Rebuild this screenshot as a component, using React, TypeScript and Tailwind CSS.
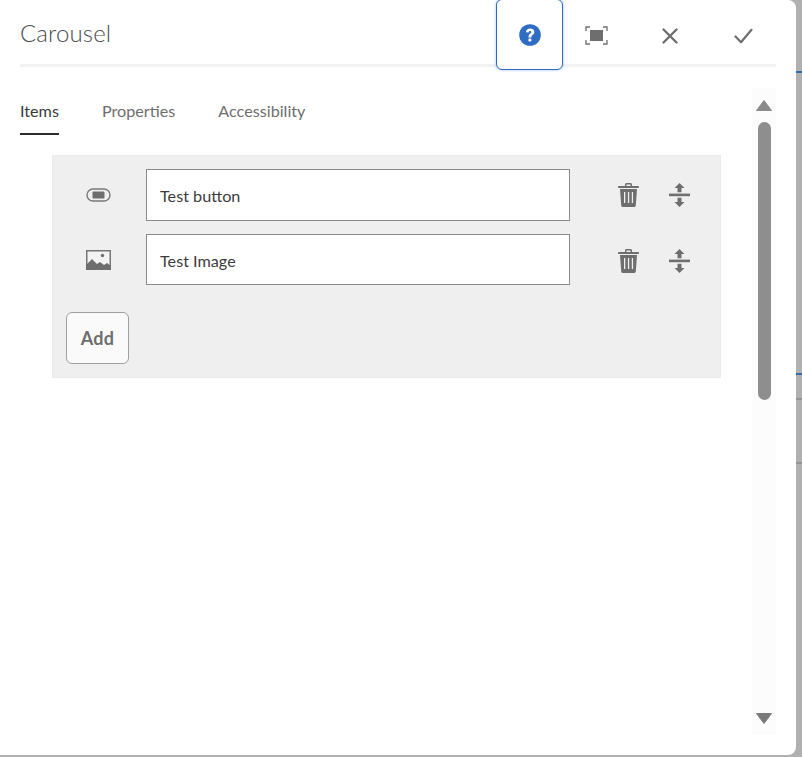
const font = "font-['Lato','Noto_Sans',sans-serif]";

function HelpIcon() {
    return (
        <svg width="22" height="22" viewBox="0 0 22 22">
            <circle cx="11" cy="11" r="10.8" fill="#2f6cc4" />
            <path d="M6.9 8.2C7.1 5.8 8.8 4.4 11.2 4.4c2.5 0 4.2 1.5 4.2 3.6 0 1.5-.8 2.3-1.8 3.1-.9.7-1.2 1.1-1.2 2v.4H9.5v-.7c0-1.5.6-2.2 1.6-3 .8-.6 1.2-1 1.2-1.6 0-.8-.5-1.2-1.2-1.2-.8 0-1.3.5-1.4 1.4z" fill="#fff" />
            <rect x="9.4" y="14.4" width="3" height="3" rx="1.2" fill="#fff" />
        </svg>
    );
}

function FullscreenIcon() {
    return (
        <svg width="23" height="19" viewBox="0 0 23 19" fill="none">
            <rect x="5" y="4" width="13" height="11" fill="#6e6e6e" />
            <path d="M5 1H1v4M18 1h4v4M5 18H1v-4M18 18h4v-4" stroke="#6e6e6e" strokeWidth="1.3" />
        </svg>
    );
}

function CloseIcon() {
    return (
        <svg width="16" height="16" viewBox="0 0 16 16" fill="none">
            <path d="M1.5 1.5l13 13M14.5 1.5l-13 13" stroke="#6e6e6e" strokeWidth="2.4" strokeLinecap="round" />
        </svg>
    );
}

function CheckIcon() {
    return (
        <svg width="19" height="16" viewBox="0 0 19 16" fill="none">
            <path d="M1.5 8.5l5.5 5.7L17.5 1.8" stroke="#6e6e6e" strokeWidth="2.2" strokeLinecap="round" strokeLinejoin="round" />
        </svg>
    );
}

function ButtonIcon() {
    return (
        <svg width="25" height="14" viewBox="0 0 25 14" fill="none">
            <rect x="1" y="1" width="23" height="12" rx="6" stroke="#7a7a7a" strokeWidth="1.4" />
            <rect x="6.5" y="3.5" width="12" height="7" rx="1" fill="#6e6e6e" />
        </svg>
    );
}

function ImageIcon() {
    return (
        <svg width="25" height="20" viewBox="0 0 25 20" fill="none">
            <rect x="0.75" y="0.75" width="23.5" height="18.5" fill="#fff" fillOpacity="0.25" stroke="#767676" strokeWidth="1.5" />
            <circle cx="16.5" cy="5.5" r="1.7" fill="#6e6e6e" />
            <path d="M0 15l6-6 5 5 3-2 4 3 3-2 4 3v4H0z" fill="#6e6e6e" />
        </svg>
    );
}

function TrashIcon() {
    return (
        <svg width="21" height="24" viewBox="0 0 21 24" fill="#6e6e6e">
            <path d="M7 3V1.5C7 .7 7.7 0 8.5 0h4c.8 0 1.5.7 1.5 1.5V3h6c.6 0 1 .4 1 1s-.4 1-1 1H1C.4 5 0 4.6 0 4s.4-1 1-1zm1.4 0h4.2V1.4H8.4z" />
            <path fillRule="evenodd" d="M2 6h17l-1.2 16.5c-.1.9-.8 1.5-1.6 1.5H4.8c-.8 0-1.5-.6-1.6-1.5zm4 3v11h1.3V9zm3.9 0v11h1.3V9zm3.9 0v11h1.3V9z" />
        </svg>
    );
}

function MoveIcon() {
    return (
        <svg width="21" height="24" viewBox="0 0 21 24" fill="#6e6e6e">
            <path d="M10.5 0L15.5 5h-3V9.2H8.5V5h-3z" />
            <rect x="0" y="10.6" width="21" height="2.6" />
            <path d="M10.5 24L15.5 19h-3V14.8H8.5V19h-3z" />
        </svg>
    );
}

// o segundo item fica 1px mais abaixo que o primeiro na referencia
function ItemRow({ icon, label, inputClass, actionsClass }: { icon: React.ReactNode; label: string; inputClass: string; actionsClass: string }) {
    return (
        <div className="flex items-center">
            <div className="w-[93px] pr-[2px] flex justify-center">{icon}</div>
            <input
                readOnly
                value={label}
                className={`w-[424px] ${inputClass} border border-[#8a8a8a] bg-white px-[13px] text-[16.2px] text-[#3c3c3c] outline-none`}
            />
            <div className={`w-[58px] ml-[29px] flex justify-center ${actionsClass}`}><TrashIcon /></div>
            <div className={`w-[44px] flex justify-center ${actionsClass}`}><MoveIcon /></div>
        </div>
    );
}

function App() {
    return (
        <div className={`${font} w-[802px] h-[757px] overflow-hidden flex bg-[#b0b0b0]`}>
            <div className="w-[796px] h-[755px] bg-white rounded-br-lg rounded-tr-lg px-5 flex flex-col shrink-0">
                <header className="h-[67px] shrink-0 border-b-[3px] border-[#f2f2f2] flex justify-between">
                    <h1 className="mt-[16px] text-[24px] leading-[34px] font-light tracking-[0.12px] text-[#4b4b4b]">Carousel</h1>
                    <div className="flex items-start">
                        <button className="w-[67px] h-[71px] -mt-px rounded-md border border-[#2f6cc4] bg-white shadow-[0_0_3px_#9dbdf0] flex items-center justify-center relative z-10">
                            <HelpIcon />
                        </button>
                        <button className="w-[66px] h-[71px] flex items-center justify-center"><FullscreenIcon /></button>
                        <button className="w-[73px] h-[71px] ml-[4px] flex items-center justify-center"><CloseIcon /></button>
                        <button className="w-[74px] h-[71px] mr-[-4px] flex items-center justify-center"><CheckIcon /></button>
                    </div>
                </header>

                <div className="flex flex-1 min-h-0">
                    <main className="w-[732px] shrink-0">
                        <nav className="flex gap-[43px] mt-[30px] text-[16.2px] leading-[28px]">
                            <span className="text-[#3a3a3a] border-b-2 border-[#2c2c2c] h-[38px]">Items</span>
                            <span className="text-[#6e6e6e]">Properties</span>
                            <span className="text-[#6e6e6e]">Accessibility</span>
                        </nav>

                        <section className="ml-8 mt-5 w-[669px] h-[223px] bg-[#efefef] border border-[#ebebeb] pt-[13px]">
                            <div className="flex flex-col gap-[13px]">
                                <ItemRow icon={<ButtonIcon />} label="Test button" inputClass="h-[52px]" actionsClass="" />
                                <ItemRow icon={<ImageIcon />} label="Test Image" inputClass="h-[51px] pt-[2px]" actionsClass="mt-[2px]" />
                            </div>
                            <button className="ml-[13px] mt-[27px] w-[63px] h-[52px] rounded-md border border-[#a0a0a0] bg-[#fafafa] text-[18px] font-bold tracking-[0.2px] text-[#6e6e6e]">
                                Add
                            </button>
                        </section>
                    </main>

                    <aside className="w-6 mt-[21px] mb-[20px] bg-[#fcfcfc] flex flex-col items-center">
                        <svg width="16" height="11" viewBox="0 0 16 11" className="mt-[12px] shrink-0">
                            <path d="M8 .5L15.5 10.5H.5z" fill="#8a8a8a" stroke="#8a8a8a" strokeLinejoin="round" />
                        </svg>
                        <div className="w-[13px] h-[278px] mt-[11px] rounded-full bg-[#8e8e8e] shrink-0" />
                        <svg width="16" height="11" viewBox="0 0 16 11" className="mt-[313px] shrink-0">
                            <path d="M8 10.5L15.5 .5H.5z" fill="#7a7a7a" stroke="#7a7a7a" strokeLinejoin="round" />
                        </svg>
                    </aside>
                </div>
            </div>

            <div className="flex-1 flex flex-col">
                <div className="h-[2px] mt-[71px] bg-[#2f6cb0]" />
                <div className="h-[2px] mt-[300px] bg-[#2f6cb0]" />
                <div className="h-[2px] mt-[23px] bg-[#949494]" />
                <div className="h-[2px] mt-[62px] bg-[#949494]" />
            </div>
        </div>
    );
}

export default App;
